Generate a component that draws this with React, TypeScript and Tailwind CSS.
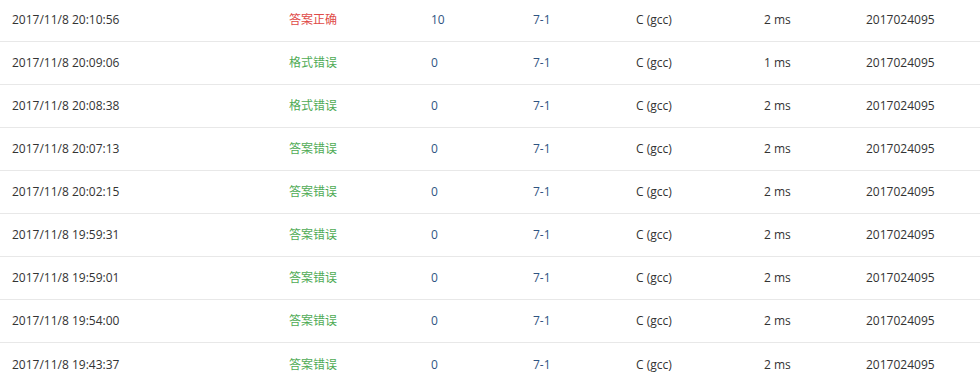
const rows = [
  { time: "2017/11/8 20:10:56", status: "答案正确", ok: true, score: "10", cost: "2 ms" },
  { time: "2017/11/8 20:09:06", status: "格式错误", ok: false, score: "0", cost: "1 ms" },
  { time: "2017/11/8 20:08:38", status: "格式错误", ok: false, score: "0", cost: "2 ms" },
  { time: "2017/11/8 20:07:13", status: "答案错误", ok: false, score: "0", cost: "2 ms" },
  { time: "2017/11/8 20:02:15", status: "答案错误", ok: false, score: "0", cost: "2 ms" },
  { time: "2017/11/8 19:59:31", status: "答案错误", ok: false, score: "0", cost: "2 ms" },
  { time: "2017/11/8 19:59:01", status: "答案错误", ok: false, score: "0", cost: "2 ms" },
  { time: "2017/11/8 19:54:00", status: "答案错误", ok: false, score: "0", cost: "2 ms" },
  { time: "2017/11/8 19:43:37", status: "答案错误", ok: false, score: "0", cost: "2 ms" },
];

export default function App() {
  return (
    <main className="w-[980px] h-[388px] overflow-hidden bg-white text-[12px] text-[#333] font-['Open_Sans','Noto_Sans_CJK_SC',sans-serif]">
      <div className="-mt-[1px]">
        {rows.map((r, i) => (
          <div
            key={i}
            className={`grid grid-cols-[277px_142px_102px_103px_128px_102px_1fr] items-center h-[43px] ${
              i < rows.length - 1 ? "border-b border-[#e8e8e8]" : ""
            }`}
          >
            <div className="px-3">{r.time}</div>
            <div className={`px-3 ${r.ok ? "text-[#e04a47]" : "text-[#4fab55]"}`}>{r.status}</div>
            <div className="px-3 text-[#2f5482]">{r.score}</div>
            <div className="px-3 text-[#2f5482]">7-1</div>
            <div className="px-3">C (gcc)</div>
            <div className="px-3">{r.cost}</div>
            <div className="px-3">2017024095</div>
          </div>
        ))}
      </div>
    </main>
  );
}
